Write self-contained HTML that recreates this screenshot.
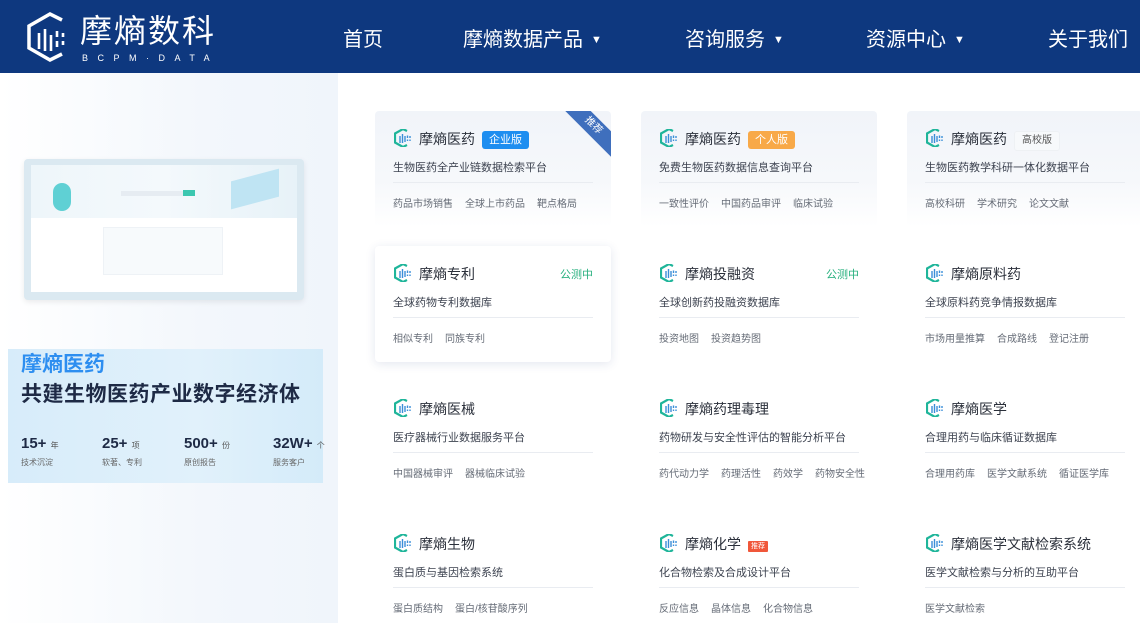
<!DOCTYPE html>
<html><head><meta charset="utf-8"><style>
*{margin:0;padding:0;box-sizing:border-box}
body{width:1140px;height:623px;overflow:hidden;background:#fff;font-family:"Liberation Sans","Noto Sans CJK SC",sans-serif;position:relative}
.hdr{position:absolute;left:0;top:0;width:1140px;height:73px;background:#0e387f}
.nav{position:absolute;top:27px;color:#fff;font-size:20px;line-height:26px}
.nav .ar{font-size:11px;margin-left:8px;vertical-align:3px}
.left{position:absolute;left:0;top:73px;width:338px;height:550px;background:linear-gradient(90deg,#fff 0%,#f3f7fc 60%,#f0f5fb 100%)}
.card{position:absolute;width:236px;height:116px;border-radius:4px}
.card.g{background:linear-gradient(180deg,#f1f4f9 0%,#f6f8fb 60%,#fff 100%)}
.card.s{background:#fff;box-shadow:0 2px 10px rgba(30,60,120,.12)}
.card .ic{position:absolute;left:19px;top:18px}
.card .t{position:absolute;left:44px;top:18px;font-size:14px;color:#2a2f3a;line-height:20px;white-space:nowrap}
.card .d{position:absolute;left:18px;top:48px;font-size:11px;color:#3d4350;white-space:nowrap}
.card .ln{position:absolute;left:18px;top:71px;width:200px;height:1px;background:#e9ecf1}
.card .tg{position:absolute;left:18px;top:84px;font-size:10px;color:#666c77;white-space:nowrap}
.tg span{margin-right:12px}
.badge{display:inline-block;font-size:11px;line-height:18px;padding:0 7px;border-radius:3px;margin-left:7px;vertical-align:1px}
.beta{position:absolute;right:18px;top:20px;color:#27b07e;font-size:11px}
</style></head><body>
<div class="hdr">
 <svg style="position:absolute;left:24px;top:11px" width="52" height="52" viewBox="0 0 52 52" fill="none" stroke="#fff" stroke-width="3.5">
  <path d="M38 9 L26 3 L5 15 V37 L26 49 L38 43"/>
  <g stroke-width="2.6"><line x1="15" y1="22" x2="15" y2="38"/><line x1="21" y1="18" x2="21" y2="40"/><line x1="27" y1="24" x2="27" y2="40"/><line x1="33" y1="20" x2="33" y2="26"/><line x1="33" y1="30" x2="33" y2="36"/><line x1="39" y1="22" x2="39" y2="26"/><line x1="39" y1="30" x2="39" y2="34"/></g>
 </svg>
 <div style="position:absolute;left:80px;top:12px;color:#fff;font-size:32px;line-height:38px;letter-spacing:2px">摩熵数科</div>
 <div style="position:absolute;left:82px;top:53px;color:#fff;font-size:9px;letter-spacing:9.5px">BCPM·DATA</div>
 <div class="nav" style="left:343px">首页</div>
 <div class="nav" style="left:463px">摩熵数据产品<span class="ar">▼</span></div>
 <div class="nav" style="left:685px">咨询服务<span class="ar">▼</span></div>
 <div class="nav" style="left:866px">资源中心<span class="ar">▼</span></div>
 <div class="nav" style="left:1048px">关于我们</div>
</div>
<div class="left">
 <div style="position:absolute;left:24px;top:86px;width:280px;height:141px;background:#dbe9f1;border-radius:4px;box-shadow:0 2px 6px rgba(0,0,0,.08)">
  <div style="position:absolute;left:7px;top:6px;width:266px;height:127px;background:#fff">
   <div style="position:absolute;left:0;top:0;width:266px;height:53px;background:linear-gradient(90deg,#eef6fa,#f4f9fc 50%,#e7f2f8)"></div>
   <div style="position:absolute;left:22px;top:18px;width:18px;height:28px;border-radius:9px;background:#5fd0d4"></div>
   <div style="position:absolute;left:90px;top:26px;width:66px;height:5px;background:#e6ecf2"></div>
   <div style="position:absolute;left:152px;top:25px;width:12px;height:6px;background:#3cc7b0"></div>
   <div style="position:absolute;left:200px;top:10px;width:48px;height:28px;background:#bfe4f3;transform:skewY(-15deg)"></div>
   <div style="position:absolute;left:72px;top:62px;width:120px;height:48px;background:#f7fafc;border:1px solid #eef2f6"></div>
  </div>
 </div>
 <div style="position:absolute;left:8px;top:276px;width:315px;height:134px;background:linear-gradient(90deg,#d7ecfa,#e1f1fb 60%,#d4ebf9)">
  <div style="position:absolute;left:13px;top:2px;font-size:21px;font-weight:bold;color:#2d8ef0;line-height:28px">摩熵医药</div>
  <div style="position:absolute;left:13px;top:31px;font-size:21px;font-weight:bold;color:#1e2a45;line-height:30px;letter-spacing:.5px">共建生物医药产业数字经济体</div>
  <div style="position:absolute;left:13px;top:86px;font-size:15px;font-weight:bold;color:#1e2a45">15+ <span style="font-size:8px;font-weight:normal;color:#555">年</span></div>
  <div style="position:absolute;left:94px;top:86px;font-size:15px;font-weight:bold;color:#1e2a45">25+ <span style="font-size:8px;font-weight:normal;color:#555">项</span></div>
  <div style="position:absolute;left:176px;top:86px;font-size:15px;font-weight:bold;color:#1e2a45">500+ <span style="font-size:8px;font-weight:normal;color:#555">份</span></div>
  <div style="position:absolute;left:265px;top:86px;font-size:15px;font-weight:bold;color:#1e2a45;white-space:nowrap">32W+ <span style="font-size:8px;font-weight:normal;color:#555">个</span></div>
  <div style="position:absolute;left:13px;top:108px;font-size:8px;color:#666">技术沉淀</div>
  <div style="position:absolute;left:94px;top:108px;font-size:8px;color:#666">软著、专利</div>
  <div style="position:absolute;left:176px;top:108px;font-size:8px;color:#666">原创报告</div>
  <div style="position:absolute;left:265px;top:108px;font-size:8px;color:#666">服务客户</div>
 </div>
</div>

<svg width="0" height="0" style="position:absolute"><defs><g id="ico"><path d="M13 2 L9 0 L1 4.5 V13.5 L9 18 L13 16" fill="none" stroke="#1fb59a" stroke-width="2.2"/><g stroke="#3a8fd8" stroke-width="1.4"><line x1="6" y1="7" x2="6" y2="14"/><line x1="8.5" y1="5" x2="8.5" y2="14"/><line x1="11" y1="7" x2="11" y2="13"/><line x1="13.5" y1="6.5" x2="13.5" y2="9"/><line x1="16" y1="7" x2="16" y2="9"/><line x1="13.5" y1="10.5" x2="13.5" y2="12"/><line x1="16" y1="10.5" x2="16" y2="12"/></g></g></defs></svg>

<div class="card g" style="left:375px;top:111px;overflow:hidden">
 <svg class="ic" width="18" height="18"><use href="#ico"/></svg>
 <div class="t">摩熵医药<span class="badge" style="background:#1e8ef0;color:#fff">企业版</span></div>
 <div style="position:absolute;right:-22px;top:6px;width:80px;height:18px;background:#3f6fbd;color:#fff;font-size:10px;text-align:center;line-height:18px;transform:rotate(45deg)">推荐</div>
 <div class="d">生物医药全产业链数据检索平台</div><div class="ln"></div>
 <div class="tg"><span>药品市场销售</span><span>全球上市药品</span><span>靶点格局</span></div>
</div>
<div class="card g" style="left:641px;top:111px">
 <svg class="ic" width="18" height="18"><use href="#ico"/></svg>
 <div class="t">摩熵医药<span class="badge" style="background:#f8a948;color:#fff">个人版</span></div>
 <div class="d">免费生物医药数据信息查询平台</div><div class="ln"></div>
 <div class="tg"><span>一致性评价</span><span>中国药品审评</span><span>临床试验</span></div>
</div>
<div class="card g" style="left:907px;top:111px">
 <svg class="ic" width="18" height="18"><use href="#ico"/></svg>
 <div class="t">摩熵医药<span class="badge" style="background:#f7f9fb;color:#555;font-size:10px;border:1px solid #eef1f4">高校版</span></div>
 <div class="d">生物医药教学科研一体化数据平台</div><div class="ln"></div>
 <div class="tg"><span>高校科研</span><span>学术研究</span><span>论文文献</span></div>
</div>
<div class="card s" style="left:375px;top:246px">
 <svg class="ic" width="18" height="18"><use href="#ico"/></svg>
 <div class="t">摩熵专利</div><div class="beta">公测中</div>
 <div class="d">全球药物专利数据库</div><div class="ln"></div>
 <div class="tg"><span>相似专利</span><span>同族专利</span></div>
</div>
<div class="card" style="left:641px;top:246px">
 <svg class="ic" width="18" height="18"><use href="#ico"/></svg>
 <div class="t">摩熵投融资</div><div class="beta">公测中</div>
 <div class="d">全球创新药投融资数据库</div><div class="ln"></div>
 <div class="tg"><span>投资地图</span><span>投资趋势图</span></div>
</div>
<div class="card" style="left:907px;top:246px">
 <svg class="ic" width="18" height="18"><use href="#ico"/></svg>
 <div class="t">摩熵原料药</div>
 <div class="d">全球原料药竞争情报数据库</div><div class="ln"></div>
 <div class="tg"><span>市场用量推算</span><span>合成路线</span><span>登记注册</span></div>
</div>
<div class="card" style="left:375px;top:381px">
 <svg class="ic" width="18" height="18"><use href="#ico"/></svg>
 <div class="t">摩熵医械</div>
 <div class="d">医疗器械行业数据服务平台</div><div class="ln"></div>
 <div class="tg"><span>中国器械审评</span><span>器械临床试验</span></div>
</div>
<div class="card" style="left:641px;top:381px">
 <svg class="ic" width="18" height="18"><use href="#ico"/></svg>
 <div class="t">摩熵药理毒理</div>
 <div class="d">药物研发与安全性评估的智能分析平台</div><div class="ln"></div>
 <div class="tg"><span>药代动力学</span><span>药理活性</span><span>药效学</span><span>药物安全性</span></div>
</div>
<div class="card" style="left:907px;top:381px">
 <svg class="ic" width="18" height="18"><use href="#ico"/></svg>
 <div class="t">摩熵医学</div>
 <div class="d">合理用药与临床循证数据库</div><div class="ln"></div>
 <div class="tg"><span>合理用药库</span><span>医学文献系统</span><span>循证医学库</span></div>
</div>
<div class="card" style="left:375px;top:516px">
 <svg class="ic" width="18" height="18"><use href="#ico"/></svg>
 <div class="t">摩熵生物</div>
 <div class="d">蛋白质与基因检索系统</div><div class="ln"></div>
 <div class="tg"><span>蛋白质结构</span><span>蛋白/核苷酸序列</span></div>
</div>
<div class="card" style="left:641px;top:516px">
 <svg class="ic" width="18" height="18"><use href="#ico"/></svg>
 <div class="t">摩熵化学<span class="badge" style="background:#f0573a;color:#fff;font-size:7px;line-height:11px;padding:0 3px;border-radius:1px">推荐</span></div>
 <div class="d">化合物检索及合成设计平台</div><div class="ln"></div>
 <div class="tg"><span>反应信息</span><span>晶体信息</span><span>化合物信息</span></div>
</div>
<div class="card" style="left:907px;top:516px">
 <svg class="ic" width="18" height="18"><use href="#ico"/></svg>
 <div class="t">摩熵医学文献检索系统</div>
 <div class="d">医学文献检索与分析的互助平台</div><div class="ln"></div>
 <div class="tg"><span>医学文献检索</span></div>
</div>
</body></html>
